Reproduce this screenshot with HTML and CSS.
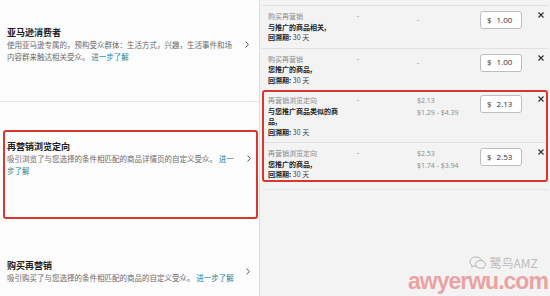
FILE: index.html
```html
<!DOCTYPE html>
<html lang="zh-CN">
<head>
<meta charset="utf-8">
<link rel="stylesheet" href="styles.css">
</head>
<body>
<div class="page">
  <div class="left">
    <div class="item item-first">
      <div class="item-text">
        <div class="item-title">亚马逊消费者</div>
        <div class="item-desc">使用亚马逊专属的，预构受众群体：生活方式，兴趣，生活事件和场内容群来触达相关受众。 <a class="link">进一步了解</a></div>
      </div>
      <svg class="chev" width="4" height="7" viewBox="0 0 4 7"><path d="M0.6 0.6 L3.3 3.5 L0.6 6.4" fill="none" stroke="#555" stroke-width="1"/></svg>
    </div>
    <div class="item item-selected">
      <div class="item-text">
        <div class="item-title">再营销浏览定向</div>
        <div class="item-desc">吸引浏览了与您选择的条件相匹配的商品详情页的自定义受众。 <a class="link">进一步了解</a></div>
      </div>
      <svg class="chev" width="4" height="7" viewBox="0 0 4 7"><path d="M0.6 0.6 L3.3 3.5 L0.6 6.4" fill="none" stroke="#555" stroke-width="1"/></svg>
    </div>
    <div class="item item-last">
      <div class="item-text">
        <div class="item-title">购买再营销</div>
        <div class="item-desc">吸引购买了与您选择的条件相匹配的商品的自定义受众。 <a class="link">进一步了解</a></div>
      </div>
      <svg class="chev" width="4" height="7" viewBox="0 0 4 7"><path d="M0.6 0.6 L3.3 3.5 L0.6 6.4" fill="none" stroke="#555" stroke-width="1"/></svg>
    </div>
  </div>

  <div class="right">
    <div class="row">
      <div class="name">
        <div class="type">购买再营销</div>
        <div class="target">与推广的商品相关,</div>
        <div class="lookback"><b>回溯期:</b> 30 天</div>
      </div>
      <div class="c2">-</div>
      <div class="c3 dash">-</div>
      <div class="bid"><span class="cur">$</span><span>1.00</span></div>
      <svg class="remove" width="6" height="6" viewBox="0 0 6 6"><path d="M0.5 0.5 L5.5 5.5 M5.5 0.5 L0.5 5.5" stroke="#333" stroke-width="1.2"/></svg>
    </div>
    <div class="row">
      <div class="name">
        <div class="type">购买再营销</div>
        <div class="target">您推广的商品,</div>
        <div class="lookback"><b>回溯期:</b> 30 天</div>
      </div>
      <div class="c2">-</div>
      <div class="c3 dash">-</div>
      <div class="bid"><span class="cur">$</span><span>1.00</span></div>
      <svg class="remove" width="6" height="6" viewBox="0 0 6 6"><path d="M0.5 0.5 L5.5 5.5 M5.5 0.5 L0.5 5.5" stroke="#333" stroke-width="1.2"/></svg>
    </div>
    <div class="group">
      <div class="row row-first">
        <div class="name">
          <div class="type">再营销浏览定向</div>
          <div class="target">与您推广商品类似的商品,</div>
          <div class="lookback"><b>回溯期:</b> 30 天</div>
        </div>
        <div class="c2">-</div>
        <div class="c3"><div>$2.13</div><div>$1.29 - $4.39</div></div>
        <div class="bid"><span class="cur">$</span><span>2.13</span></div>
        <svg class="remove" width="6" height="6" viewBox="0 0 6 6"><path d="M0.5 0.5 L5.5 5.5 M5.5 0.5 L0.5 5.5" stroke="#333" stroke-width="1.2"/></svg>
      </div>
      <div class="row">
        <div class="name">
          <div class="type">再营销浏览定向</div>
          <div class="target">您推广的商品,</div>
          <div class="lookback"><b>回溯期:</b> 30 天</div>
        </div>
        <div class="c2">-</div>
        <div class="c3"><div>$2.53</div><div>$1.74 - $3.94</div></div>
        <div class="bid"><span class="cur">$</span><span>2.53</span></div>
        <svg class="remove" width="6" height="6" viewBox="0 0 6 6"><path d="M0.5 0.5 L5.5 5.5 M5.5 0.5 L0.5 5.5" stroke="#333" stroke-width="1.2"/></svg>
      </div>
    </div>
    <div class="rule"></div>
  </div>

  <div class="watermark">
    <div class="wm-top">
      <svg width="18" height="13" viewBox="0 0 18 13"><path d="M7 1 C3.5 1 1 3.2 1 5.8 C1 7.3 1.8 8.5 3 9.3 L2.5 11 L4.6 10 C5.4 10.3 6.2 10.4 7 10.4" fill="none" stroke="#b5b5b5" stroke-width="1"/><path d="M11.5 4.5 C8.6 4.5 6.6 6.3 6.6 8.4 C6.6 10.5 8.6 12.2 11.5 12.2 C12.1 12.2 12.7 12.1 13.3 11.9 L15 12.7 L14.6 11.2 C15.8 10.5 16.5 9.5 16.5 8.4 C16.5 6.3 14.3 4.5 11.5 4.5 Z" fill="none" stroke="#b5b5b5" stroke-width="1"/><path d="M7 1 C10.2 1 12.6 2.7 13 4.8" fill="none" stroke="#b5b5b5" stroke-width="1"/></svg>
      <span>鹭鸟AMZ</span>
    </div>
    <div class="wm-url">awyerwu.com</div>
  </div>
</div>
</body>
</html>
```

FILE: styles.css
```css
* { box-sizing: border-box; }
html, body { margin: 0; padding: 0; }
body {
  width: 550px;
  height: 296px;
  overflow: hidden;
  background: #fcfcfc;
  font-family: "Noto Sans CJK SC", "Noto Sans", sans-serif;
  color: #333;
}
.page {
  position: relative;
  display: flex;
  width: 550px;
  height: 296px;
}

/* left column */
.left {
  width: 260px;
  flex: none;
  background: #fcfcfc;
  border-right: 1px solid #dedede;
  display: flex;
  flex-direction: column;
}
.item {
  display: flex;
  align-items: center;
}
.item-text { width: 229px; flex: none; }
.item-title {
  font-size: 9px;
  line-height: 13px;
  font-weight: 700;
  color: #222;
}
.item-desc {
  font-size: 7.5px;
  line-height: 11.5px;
  color: #6a6a6a;
}
.link { color: #1f8496; }
.chev { flex: none; margin-left: 9px; }

.item-first {
  padding: 26px 0 39px 7px;
  border-bottom: 1px solid #e4e4e4;
}
.item-selected {
  margin: 28px 1px 0 3px;
  padding: 8px 0 41px 2px;
  border: 2px solid #d7372d;
  border-radius: 3px;
}
.item-selected .chev { margin-left: 11px; }
.item-last {
  margin-top: 40px;
  padding-left: 7px;
}
.item-last .chev { margin-left: 10px; }

/* right column */
.right {
  flex: 1;
  background: #f3f3f3;
  padding: 5px 2px 0 2px;
}
.row {
  display: grid;
  grid-template-columns: 89px 60px 63px 58px 1fr;
  align-items: start;
  padding: 5px 0 5px 6px;
  border-top: 1px solid #e0e0e0;
  font-size: 7px;
  line-height: 10.5px;
}
.type { color: #8a8a8a; }
.target { color: #222; font-weight: 700; max-width: 75px; }
.lookback { color: #444; }
.lookback b { color: #222; }
.c2, .c3 { color: #888; font-family: "Open Sans", "Noto Sans CJK SC", sans-serif; }
.c3 { line-height: 12px; }
.c3.dash { padding-top: 4px; line-height: 10.5px; }
.bid {
  width: 42px;
  height: 18px;
  display: flex;
  align-items: center;
  gap: 5px;
  padding-left: 6px;
  background: #fff;
  border: 1px solid #bdbdbd;
  border-radius: 3px;
  font-family: "Open Sans", sans-serif;
  font-size: 8px;
  color: #333;
}
.remove { margin-top: 1px; }

.group {
  border: 2px solid #d7372d;
  border-radius: 3px;
  margin: 0;
}
.group .row { padding-left: 4px; }
.group .row-first { border-top: none; padding-top: 3px; }
.group .row:last-child { padding-bottom: 0; }
.rule {
  margin-top: 7px;
  border-top: 1px solid #e6e6e6;
}

/* watermark */
.watermark {
  position: absolute;
  left: 408px;
  top: 256px;
  display: flex;
  flex-direction: column;
  align-items: flex-end;
}
.wm-top {
  display: flex;
  align-items: center;
  gap: 3px;
  margin-right: 10px;
  margin-bottom: 2px;
  font-family: "Noto Sans CJK SC", sans-serif;
  font-size: 12px;
  line-height: 13px;
  color: #bcbcbc;
}
.wm-url {
  font-family: "Liberation Sans", sans-serif;
  font-weight: 700;
  font-size: 23px;
  line-height: 20px;
  letter-spacing: -1px;
  color: #eaa3a3;
}
```
